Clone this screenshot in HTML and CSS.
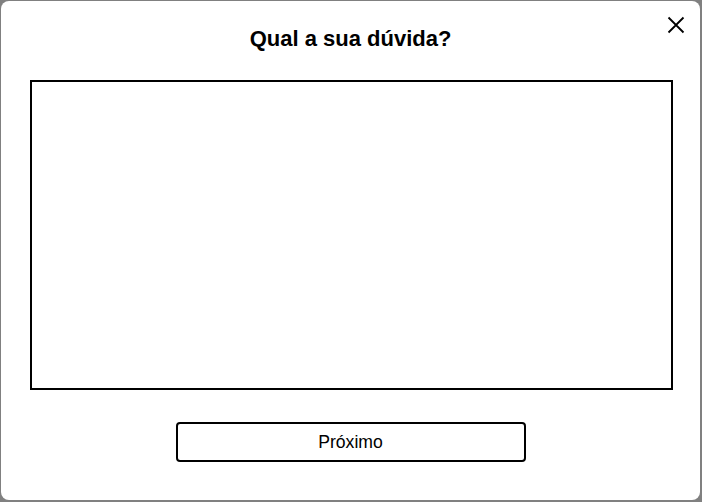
FILE: index.html
```html
<!DOCTYPE html>
<html lang="pt">
<head>
<meta charset="utf-8">
<title>Qual a sua dúvida?</title>
<link rel="stylesheet" href="styles.css">
</head>
<body>
<div class="modal">
  <button class="close" aria-label="Fechar">
    <svg width="18" height="18" viewBox="0 0 18 18"><path d="M1.5 1.5 L16.5 16.5 M16.5 1.5 L1.5 16.5" stroke="#000" stroke-width="1.8" fill="none"/></svg>
  </button>
  <h1 class="title">Qual a sua dúvida?</h1>
  <textarea class="question"></textarea>
  <button class="next">Próximo</button>
</div>
</body>
</html>
```
FILE: styles.css
```css
html, body {
  margin: 0;
  padding: 0;
}
body {
  background: #808080;
  width: 702px;
  height: 502px;
  overflow: hidden;
  font-family: "Liberation Sans", Arial, sans-serif;
}
.modal {
  position: relative;
  box-sizing: border-box;
  margin: 1px 0 0 1px;
  width: 699px;
  height: 499px;
  background: #fff;
  border-radius: 8px;
  padding-top: 25px;
  display: flex;
  flex-direction: column;
  align-items: center;
}
.close {
  position: absolute;
  top: 15px;
  right: 15px;
  padding: 0;
  border: 0;
  background: none;
  width: 18px;
  height: 18px;
  display: block;
}
.close svg { display: block; }
.title {
  margin: 0;
  font-size: 22px;
  line-height: 26px;
  font-weight: bold;
  color: #000;
}
.question {
  box-sizing: border-box;
  margin: 28px 0 0 2px;
  width: 643px;
  height: 310px;
  border: 2px solid #000;
  border-radius: 0;
  resize: none;
  padding: 4px;
  font-family: inherit;
  outline: none;
}
.next {
  box-sizing: border-box;
  margin-top: 32px;
  width: 350px;
  height: 40px;
  border: 2px solid #000;
  border-radius: 4px;
  background: #fff;
  font-family: inherit;
  font-size: 17.6px;
  color: #000;
}
```
